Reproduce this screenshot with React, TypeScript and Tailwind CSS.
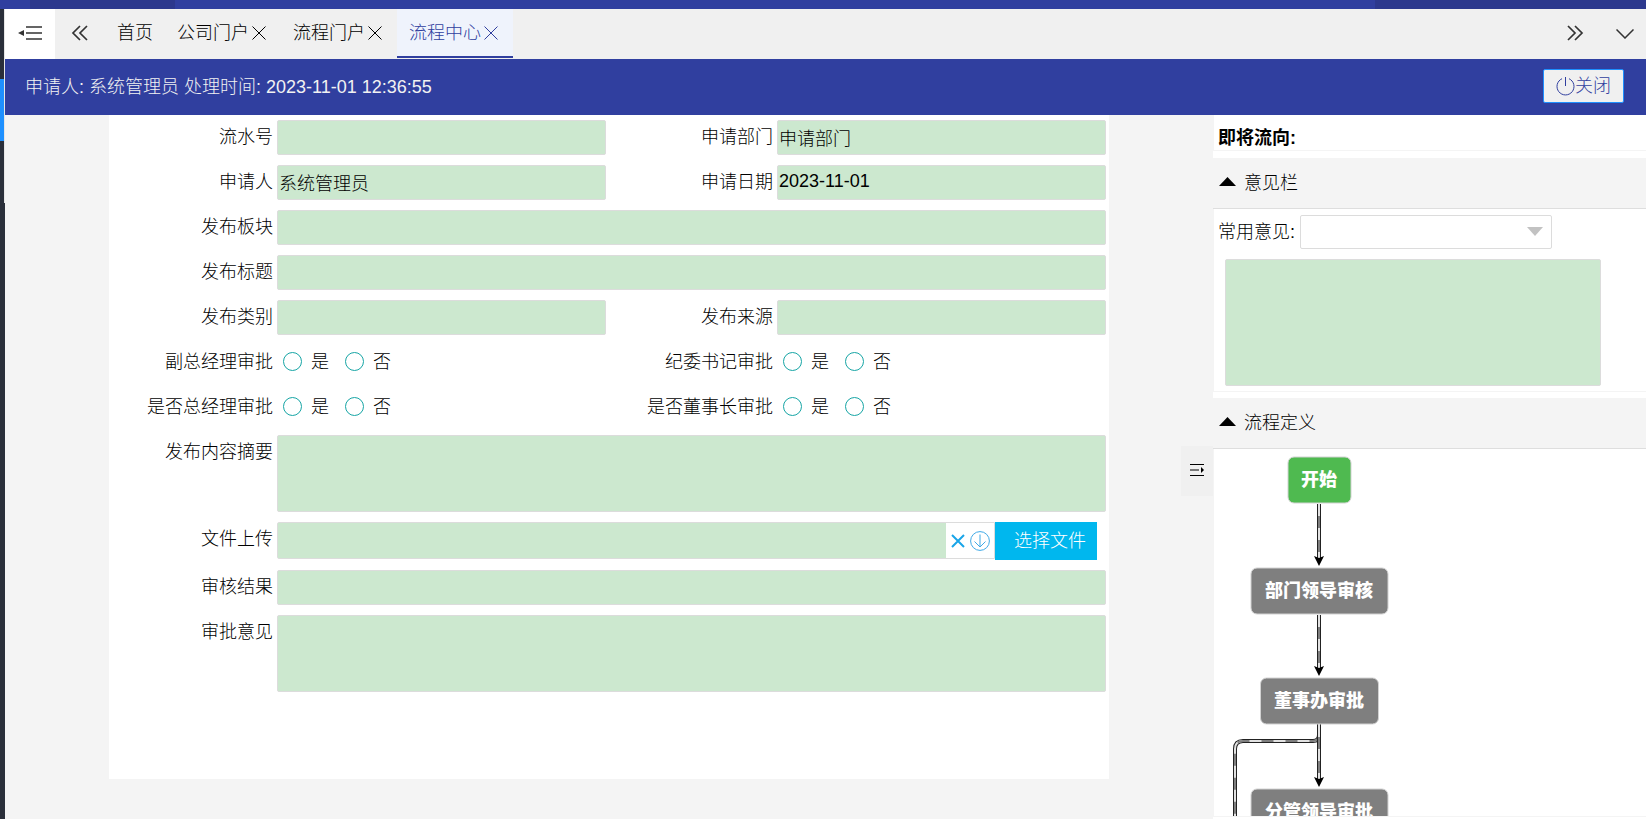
import * as React from "react";

const FIELD = "rounded-[2px] border border-[#dcdcdc] bg-[#cce8cf] text-[18px] text-black outline-none";

const NODES = [
  { label: "开始", y: 31, width: 63, fill: "#4fba50" },
  { label: "部门领导审核", y: 142, width: 137, fill: "#7f7f7f" },
  { label: "董事办审批", y: 252, width: 118, fill: "#7f7f7f" },
  { label: "分管领导审批", y: 363, width: 137, fill: "#7f7f7f" },
];

export default function App() {
  return (
    <div className="flex h-screen flex-col overflow-hidden bg-[#f4f4f4] font-['Liberation_Sans','Noto_Sans_CJK_SC',sans-serif] text-[18px] font-light text-black">
      <div className="flex h-[9px] shrink-0 bg-[#303f9f]">
        <div className="ml-[30px] w-[145px] bg-[#2c388d]" />
        <div className="ml-auto w-[271px] bg-[#2c388d]" />
      </div>
      <div className="flex min-h-0 flex-1">
        <div className="w-[5px] shrink-0 bg-[#2a2f3a]">
          <div className="h-[70px] border-r border-[#e6e6e6]" />
          <div className="h-[62px] border-r border-[#e6e6e6] bg-[#1e90ff]" />
          <div className="h-[62px] border-r border-[#e6e6e6]" />
        </div>
        <div className="flex min-w-0 flex-1 flex-col">
          <TabBar />
          <TitleBar />
          <div className="flex min-h-0 flex-1">
            <main className="relative min-w-0 flex-1">
              <ApplyForm />
              <button
                type="button"
                aria-label="收起侧栏"
                className="absolute top-[47%] right-0 flex h-[50px] w-8 items-center justify-center bg-[#f0f0f0] pb-[2px]"
              >
                <svg width="14" height="12" viewBox="0 0 14 12">
                  <path d="M0 0.500h14M0 6h9M0 11.500h14" stroke="#000" />
                  <path d="M11 3l3 3-3 3z" fill="#000" />
                </svg>
              </button>
            </main>
            <SidePanel />
          </div>
        </div>
      </div>
    </div>
  );
}

function TabBar() {
  return (
    <nav className="flex h-[50px] shrink-0 bg-[#f0f0f0]">
      <button type="button" aria-label="折叠菜单" className="flex w-[50px] items-center justify-center bg-white pb-[2px]">
        <svg width="26" height="16" viewBox="0 0 26 16">
          <path d="M7 5L7 11L1 8z" fill="#333" />
          <path d="M9 2h16M9 8h16M9 14h16" stroke="#333" strokeWidth="1.600" />
        </svg>
      </button>
      <button type="button" aria-label="向左滚动" className="flex w-[50px] items-center justify-center pb-[2px]">
        <svg width="18" height="16" viewBox="0 0 18 16" fill="none" stroke="#333" strokeWidth="1.700">
          <path d="M9 1L2 8l7 7M16 1L9 8l7 7" />
        </svg>
      </button>
      <Tab label="首页" />
      <Tab label="公司门户" closable />
      <Tab label="流程门户" closable />
      <Tab label="流程中心" closable active />
      <button type="button" aria-label="向右滚动" className="ml-auto flex w-[50px] items-center justify-center pb-[2px] pl-2">
        <svg width="18" height="16" viewBox="0 0 18 16" fill="none" stroke="#333" strokeWidth="1.700">
          <path d="M2 1l7 7-7 7M9 1l7 7-7 7" />
        </svg>
      </button>
      <button type="button" aria-label="更多" className="flex w-[50px] items-center justify-center pl-2">
        <svg width="18" height="10" viewBox="0 0 18 10" fill="none" stroke="#333" strokeWidth="1.500">
          <path d="M0.500 0.500L9 9l8.500-8.500" />
        </svg>
      </button>
    </nav>
  );
}

function Tab({ label, closable, active }: { label: string; closable?: boolean; active?: boolean }) {
  return (
    <div
      className={
        active
          ? "mb-px flex items-center border-b-2 border-[#303f9f] bg-[#eff3fc] px-3 pt-[2px] text-[#303f9f]"
          : "mb-px flex items-center px-3"
      }
    >
      <a href="#">{label}</a>
      {closable && (
        <button type="button" aria-label={"关闭" + label} className="flex w-5 justify-center pb-[2px]">
          <svg width="14" height="14" viewBox="0 0 14 14" stroke="currentColor">
            <path d="M0.500 0.500l13 13M13.500 0.500l-13 13" />
          </svg>
        </button>
      )}
    </div>
  );
}

function TitleBar() {
  return (
    <header className="flex h-14 shrink-0 items-center justify-between bg-[#303f9f] pr-[22px] pl-5 text-[#f2f2f2]">
      <span>申请人: 系统管理员 处理时间: 2023-11-01 12:36:55</span>
      <button
        type="button"
        className="mb-[2px] flex h-[34px] w-[81px] items-center justify-center rounded-[2px] border border-[#1e90ff] bg-[#f0f0f0] text-[#303f9f]"
      >
        <svg width="19" height="19" viewBox="0 0 19 19" fill="none" stroke="currentColor">
          <path d="M6 1.700A8.500 8.500 0 1 0 13 1.700M9.500 0v9" />
        </svg>
        关闭
      </button>
    </header>
  );
}

function ApplyForm() {
  return (
    <form className="mx-auto grid max-w-[1000px] grid-cols-2 gap-y-[10px] bg-white pt-[5px] pb-[87px]">
      <TextRow id="serial" label="流水号" />
      <TextRow id="dept" label="申请部门" value="申请部门" />
      <TextRow id="applicant" label="申请人" value="系统管理员" />
      <TextRow id="date" label="申请日期" value="2023-11-01" />
      <TextRow id="board" label="发布板块" wide />
      <TextRow id="title" label="发布标题" wide />
      <TextRow id="category" label="发布类别" />
      <TextRow id="source" label="发布来源" />
      <RadioRow name="deputy" label="副总经理审批" />
      <RadioRow name="secretary" label="纪委书记审批" />
      <RadioRow name="manager" label="是否总经理审批" />
      <RadioRow name="chairman" label="是否董事长审批" />
      <Row id="summary" label="发布内容摘要" wide>
        <textarea id="summary" className={`h-[77px] min-w-0 flex-1 resize-none px-[2px] ${FIELD}`} />
      </Row>
      <Row id="upload" label="文件上传" wide>
        <div className="mr-[9px] flex h-[38px] min-w-0 flex-1 items-start">
          <div className="flex h-[37px] min-w-0 flex-1 rounded-l-[2px] border border-[#dcdcdc]">
            <input id="upload" readOnly className="min-w-0 flex-1 bg-[#cce8cf] px-[2px] outline-none" />
            <button type="button" aria-label="清除" className="flex w-6 items-center justify-center">
              <svg width="14" height="14" viewBox="0 0 14 14" stroke="#1aa5e8" strokeWidth="2">
                <path d="M1 1l12 12M13 1L1 13" />
              </svg>
            </button>
            <button type="button" aria-label="下载" className="flex w-6 items-center">
              <svg width="20" height="20" viewBox="0 0 20 20" fill="none" stroke="#3fa9e6">
                <circle cx="10" cy="10" r="9.400" />
                <path d="M10 3.500v12.500M4.500 10.500L10 16l5.500-5.500" />
              </svg>
            </button>
          </div>
          <button type="button" className="h-[38px] w-[102px] bg-[#00b7ee] pl-2 text-white">
            选择文件
          </button>
        </div>
      </Row>
      <TextRow id="result" label="审核结果" wide />
      <Row id="opinion" label="审批意见" wide>
        <textarea id="opinion" className={`h-[77px] min-w-0 flex-1 resize-none px-[2px] ${FIELD}`} />
      </Row>
    </form>
  );
}

function Row({
  id,
  label,
  wide,
  children,
}: {
  id: string;
  label: string;
  wide?: boolean;
  children: React.ReactNode;
}) {
  return (
    <div className={wide ? "col-span-2 flex pr-[3px]" : "flex pr-[3px]"}>
      <label htmlFor={id} className="w-[168px] shrink-0 pr-1 text-right leading-[34px]">
        {label}
      </label>
      {children}
    </div>
  );
}

function TextRow({ id, label, value, wide }: { id: string; label: string; value?: string; wide?: boolean }) {
  return (
    <Row id={id} label={label} wide={wide}>
      <input id={id} type="text" defaultValue={value} className={`h-[35px] min-w-0 flex-1 px-px pb-[2px] ${FIELD}`} />
    </Row>
  );
}

function RadioRow({ name, label }: { name: string; label: string }) {
  return (
    <div role="radiogroup" aria-label={label} className="flex h-[35px]">
      <span className="w-[168px] pr-1 text-right leading-[34px]">{label}</span>
      <div className="flex items-center gap-4 pb-[2px] pl-[6px] leading-[34px]">
        {["是", "否"].map((option) => (
          <label key={option} className="flex items-center gap-[9px]">
            <input
              type="radio"
              name={name}
              value={option}
              className="size-[19px] appearance-none rounded-full border border-[#16a5a5] bg-white checked:bg-[#16a5a5]"
            />
            {option}
          </label>
        ))}
      </div>
    </div>
  );
}

function SidePanel() {
  return (
    <aside className="flex w-[433px] shrink-0 flex-col bg-white">
      <div className="mb-[7px] h-9 border-b border-l border-[#f4f4f4] pl-1 leading-[46px] font-bold">
        即将流向:
      </div>
      <PanelTitle>意见栏</PanelTitle>
      <div className="mb-[6px] border-b border-l border-[#f4f4f4] pt-[6px] pb-[5px] pl-1">
        <div className="flex items-center">
          <label htmlFor="common" className="w-[82px]">
            常用意见:
          </label>
          <div className="relative">
            <select
              id="common"
              className="block h-[34px] w-[252px] appearance-none rounded-[2px] border border-[#dcdcdc] bg-white px-2 outline-none"
            />
            <svg className="pointer-events-none absolute top-3 right-[9px]" width="16" height="9" viewBox="0 0 16 9">
              <path d="M0 0h16L8 9z" fill="#c2c2c2" />
            </svg>
          </div>
        </div>
        <textarea
          aria-label="意见"
          className={`mt-[10px] ml-[7px] block h-[127px] w-[376px] resize-none p-1 ${FIELD}`}
        />
      </div>
      <PanelTitle>流程定义</PanelTitle>
      <div className="mb-[2px] min-h-0 flex-1 overflow-hidden border-b border-l border-[#f4f4f4]">
        <FlowChart />
      </div>
    </aside>
  );
}

function PanelTitle({ children }: { children: React.ReactNode }) {
  return (
    <button
      type="button"
      className="flex h-[51px] w-full shrink-0 items-center gap-2 border-b border-[#dedede] bg-[#f4f4f4] pl-[6px]"
    >
      <svg className="mb-[3px]" width="17" height="9" viewBox="0 0 17 9">
        <path d="M0 9h17L8.500 0z" fill="#000" />
      </svg>
      {children}
    </button>
  );
}

function FlowChart() {
  return (
    <svg width="300" height="400" viewBox="0 0 300 400" fontSize="18" fontWeight="900">
      <Edge d="M105 275V286Q105 292 99 292H29Q21 292 21 300V400" />
      <Edge d="M105 55V113" arrowY={117} />
      <Edge d="M105 166V223" arrowY={227} />
      <Edge d="M105 276V334" arrowY={338} />
      {NODES.map((node) => (
        <g key={node.label}>
          <rect
            x={105.5 - node.width / 2}
            y={node.y - 23}
            width={node.width}
            height="46"
            rx="6"
            fill={node.fill}
            stroke="#d2d2d2"
          />
          <text x="105" y={node.y + 6} textAnchor="middle" fill="#fff">
            {node.label}
          </text>
        </g>
      ))}
    </svg>
  );
}

// A striped line between two dark rails, with an optional arrow head at the end.
function Edge({ d, arrowY }: { d: string; arrowY?: number }) {
  return (
    <g fill="none">
      <path d={d} stroke="#222" strokeWidth="4" />
      <path d={d} stroke="#e2e2e2" strokeWidth="2" />
      <path d={d} stroke="#7f7f7f" strokeWidth="2" strokeDasharray="12 12" strokeDashoffset="12" />
      {arrowY && <path d={`M105 ${arrowY}l-5-10 5 2 5-2z`} fill="#000" />}
    </g>
  );
}
